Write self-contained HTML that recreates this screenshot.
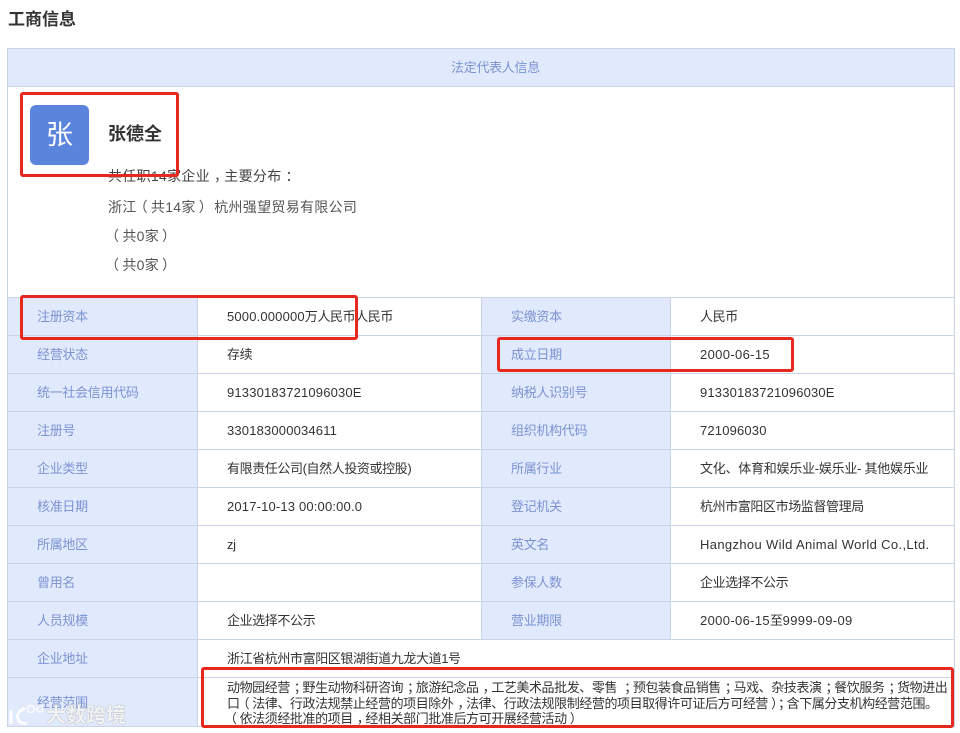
<!DOCTYPE html>
<html lang="zh">
<head>
<meta charset="utf-8">
<style>
html,body{margin:0;padding:0;background:#fff}
body{width:960px;height:733px;position:relative;overflow:hidden;font-family:"Liberation Sans","Noto Sans CJK SC",sans-serif;font-size:13px;color:#333}
.a{position:absolute;white-space:nowrap}
.bg{position:absolute;background:#e1eafc}
.h{position:absolute;height:1px;background:#c9d4e8}
.v{position:absolute;width:1px;background:#c9d4e8}
.l{position:absolute;white-space:nowrap;color:#7d92d2;line-height:40px;height:38px;letter-spacing:-.3px}
.t{position:absolute;white-space:nowrap;color:#333;line-height:40px;height:38px;letter-spacing:-.4px}
.n{letter-spacing:.17px}
.d{letter-spacing:.35px}
.p{position:relative;left:4px}
.o{position:relative;left:-3px}
.c{position:relative;left:3px}
.s{position:absolute;white-space:nowrap;line-height:18px;font-size:14px;letter-spacing:.3px;color:#555}
.r{position:absolute;border:3px solid #e8281f;border-radius:3px;box-sizing:border-box}
</style>
</head>
<body>
<div class="a" style="left:8px;top:9px;font-size:17px;font-weight:bold;line-height:22px;color:#333">工商信息</div>

<div class="bg" style="left:8px;top:49px;width:946px;height:37px"></div>
<div class="bg" style="left:8px;top:298px;width:189px;height:429px"></div>
<div class="bg" style="left:482px;top:298px;width:188px;height:342px"></div>

<div class="h" style="left:7px;top:48px;width:948px"></div>
<div class="h" style="left:7px;top:86px;width:948px"></div>
<div class="h" style="left:7px;top:297px;width:948px"></div>
<div class="h" style="left:7px;top:335px;width:948px"></div>
<div class="h" style="left:7px;top:373px;width:948px"></div>
<div class="h" style="left:7px;top:411px;width:948px"></div>
<div class="h" style="left:7px;top:449px;width:948px"></div>
<div class="h" style="left:7px;top:487px;width:948px"></div>
<div class="h" style="left:7px;top:525px;width:948px"></div>
<div class="h" style="left:7px;top:563px;width:948px"></div>
<div class="h" style="left:7px;top:601px;width:948px"></div>
<div class="h" style="left:7px;top:639px;width:948px"></div>
<div class="h" style="left:7px;top:677px;width:948px"></div>
<div class="h" style="left:7px;top:726px;width:948px"></div>
<div class="v" style="left:7px;top:48px;height:679px"></div>
<div class="v" style="left:954px;top:48px;height:679px"></div>
<div class="v" style="left:197px;top:297px;height:430px"></div>
<div class="v" style="left:481px;top:297px;height:343px"></div>
<div class="v" style="left:670px;top:297px;height:343px"></div>

<div class="l" style="left:451px;top:48px">法定代表人信息</div>

<div style="position:absolute;left:30px;top:105px;width:59px;height:60px;border-radius:6px;background:#5b84dc;color:#fff;font-size:27px;line-height:61px;text-align:center">张</div>
<div class="a" style="left:108px;top:122px;font-size:18px;font-weight:bold;line-height:24px;color:#333">张德全</div>
<div class="s" style="left:108px;top:167px;color:#444">共任职14家企业<span class="p">，</span>主要分布<span class="p">：</span></div>
<div class="s" style="left:108px;top:198px">浙江<span class="o">（</span>共14家<span class="c">）</span> 杭州强望贸易有限公司</div>
<div class="s" style="left:108px;top:227px"><span class="o">（</span>共0家<span class="c">）</span></div>
<div class="s" style="left:108px;top:256px"><span class="o">（</span>共0家<span class="c">）</span></div>

<div class="l" style="left:37px;top:297px">注册资本</div><div class="t" style="left:227px;top:297px"><span class="n">5000.000000</span>万人民币人民币</div>
<div class="l" style="left:511px;top:297px">实缴资本</div><div class="t" style="left:700px;top:297px">人民币</div>
<div class="l" style="left:37px;top:335px">经营状态</div><div class="t" style="left:227px;top:335px">存续</div>
<div class="l" style="left:511px;top:335px">成立日期</div><div class="t" style="left:700px;top:335px"><span class="d">2000-06-15</span></div>
<div class="l" style="left:37px;top:373px">统一社会信用代码</div><div class="t" style="left:227px;top:373px"><span class="n">91330183721096030E</span></div>
<div class="l" style="left:511px;top:373px">纳税人识别号</div><div class="t" style="left:700px;top:373px"><span class="n">91330183721096030E</span></div>
<div class="l" style="left:37px;top:411px">注册号</div><div class="t" style="left:227px;top:411px"><span class="n">330183000034611</span></div>
<div class="l" style="left:511px;top:411px">组织机构代码</div><div class="t" style="left:700px;top:411px"><span class="n">721096030</span></div>
<div class="l" style="left:37px;top:449px">企业类型</div><div class="t" style="left:227px;top:449px">有限责任公司(自然人投资或控股)</div>
<div class="l" style="left:511px;top:449px">所属行业</div><div class="t" style="left:700px;top:449px;letter-spacing:-.25px">文化、体育和娱乐业-娱乐业- 其他娱乐业</div>
<div class="l" style="left:37px;top:487px">核准日期</div><div class="t" style="left:227px;top:487px"><span class="n">2017-10-13 00:00:00.0</span></div>
<div class="l" style="left:511px;top:487px">登记机关</div><div class="t" style="left:700px;top:487px">杭州市富阳区市场监督管理局</div>
<div class="l" style="left:37px;top:525px">所属地区</div><div class="t" style="left:227px;top:525px">zj</div>
<div class="l" style="left:511px;top:525px">英文名</div><div class="t" style="left:700px;top:525px"><span class="d">Hangzhou Wild Animal World Co.,Ltd.</span></div>
<div class="l" style="left:37px;top:563px">曾用名</div>
<div class="l" style="left:511px;top:563px">参保人数</div><div class="t" style="left:700px;top:563px">企业选择不公示</div>
<div class="l" style="left:37px;top:601px">人员规模</div><div class="t" style="left:227px;top:601px">企业选择不公示</div>
<div class="l" style="left:511px;top:601px">营业期限</div><div class="t" style="left:700px;top:601px"><span class="d">2000-06-15</span>至<span class="d">9999-09-09</span></div>
<div class="l" style="left:37px;top:639px">企业地址</div><div class="t" style="left:227px;top:639px">浙江省杭州市富阳区银湖街道九龙大道1号</div>
<div class="l" style="left:37px;top:683px">经营范围</div>

<div class="a" style="left:227px;top:680px;line-height:15.5px;color:#333;letter-spacing:-.42px">动物园经营<span class="p">；</span>野生动物科研咨询<span class="p">；</span>旅游纪念品<span class="p">，</span>工艺美术品批发、零售 <span class="p">；</span>预包装食品销售<span class="p">；</span>马戏、杂技表演<span class="p">；</span>餐饮服务<span class="p">；</span>货物进出<br>口<span class="o">（</span>法律、行政法规禁止经营的项目除外<span class="p">，</span>法律、行政法规限制经营的项目取得许可证后方可经营<span class="c">）</span><span class="p">；</span>含下属分支机构经营范围。<br><span class="o">（</span>依法须经批准的项目<span class="p">，</span>经相关部门批准后方可开展经营活动<span class="c">）</span></div>

<svg style="position:absolute;left:8px;top:702px" width="38" height="24" viewBox="0 0 38 24" fill="none" stroke="#fff" stroke-opacity=".9" stroke-width="3">
<path d="M3 8v14"/><path d="M17 6c-6 3-9 7-7 11 1.500 4 5 5 9 4"/><circle cx="23" cy="7" r="3.500" stroke-width="1.500"/><circle cx="32" cy="7" r="3" stroke-width="1.500"/>
</svg>
<div class="a" style="left:46px;top:704px;font-size:20px;line-height:24px;font-weight:bold;color:rgba(255,255,255,.9);text-shadow:0 0 1px rgba(110,110,110,.9)">大数跨境</div>

<div class="r" style="left:20px;top:92px;width:159px;height:85px"></div>
<div class="r" style="left:20px;top:295px;width:338px;height:45px"></div>
<div class="r" style="left:497px;top:337px;width:297px;height:35px"></div>
<div class="r" style="left:201px;top:667px;width:753px;height:61px"></div>
</body>
</html>
